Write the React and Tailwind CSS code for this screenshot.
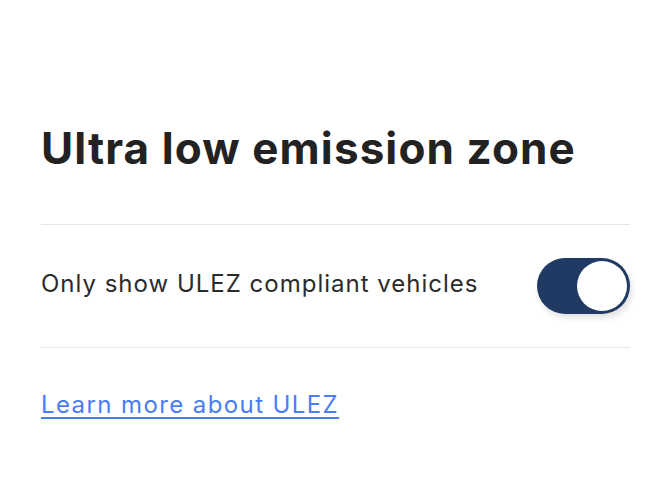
export default function App() {
  return (
    <div className="min-h-[482px] w-full bg-white px-[41px] pt-[118px] text-[#222222]" style={{ fontFamily: "Inter, 'Noto Sans', sans-serif" }}>
      <h1 className="text-[44px] font-bold leading-[60px] tracking-[1.1px]">Ultra low emission zone</h1>
      <div className="mt-[46px] h-px bg-[#e6e6e6]" />
      <div className="flex h-[122px] items-center justify-between">
        <span className="mt-[-4px] text-[24px] leading-[32px] tracking-[1px] text-[#2b2b2b]">Only show ULEZ compliant vehicles</span>
        <button className="flex h-[56px] w-[93px] items-center justify-end rounded-full bg-[#213a63] p-[3px] shadow-[2px_4px_6px_rgba(0,0,0,0.12)]">
          <span className="block h-[50px] w-[50px] rounded-full bg-white" />
        </button>
      </div>
      <div className="h-px bg-[#e6e6e6]" />
      <a href="#" className="mt-[41px] inline-block text-[24px] leading-[32px] tracking-[1.4px] text-[#4a7cf7] underline underline-offset-[4px]">Learn more about ULEZ</a>
    </div>
  );
}
